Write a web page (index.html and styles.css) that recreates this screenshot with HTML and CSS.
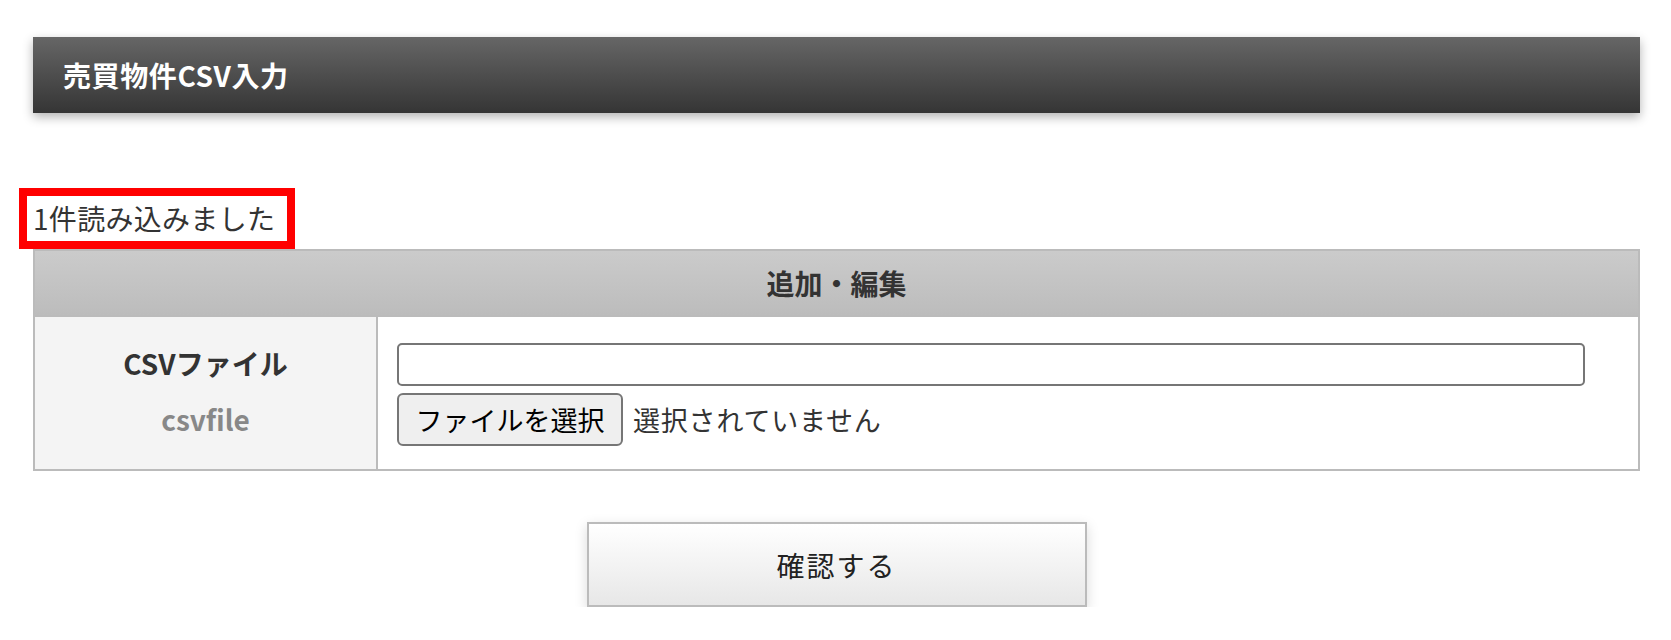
FILE: index.html
```html
<!DOCTYPE html>
<html lang="ja">
<head>
	<meta charset="utf-8">
	<meta name="viewport" content="width=device-width, initial-scale=1">
	<title>売買物件CSV入力</title>
	<link rel="stylesheet" href="styles.css">
</head>
<body>
	<div class="wrap">
		<h1 class="page-title">売買物件CSV入力</h1>

		<p class="notice">1件読み込みました</p>

		<table class="form-table">
			<tr>
				<th class="table-head" colspan="2">追加・編集</th>
			</tr>
			<tr>
				<th class="label">
					<span class="label-name">CSVファイル</span>
					<span class="label-key">csvfile</span>
				</th>
				<td class="field">
					<input type="text" class="path">
					<div class="file-row">
						<button type="button" class="file-btn">ファイルを選択</button>
						<span class="file-status">選択されていません</span>
					</div>
				</td>
			</tr>
		</table>

		<div class="actions">
			<button type="submit" class="confirm">確認する</button>
		</div>
	</div>
</body>
</html>
```

FILE: styles.css
```css
*{
	margin: 0;
}

body{
	font-family: "Noto Sans CJK JP", "Noto Sans", sans-serif;
	color: #333;
	background: #fff;
}

.wrap{
	padding: 37px 31px 0 33px;
}

.page-title{
	font-size: 28px;
	font-weight: 700;
	line-height: 76px;
	letter-spacing: 0.6px;
	color: #fff;
	padding: 0 30px;
	background: linear-gradient(180deg, #666 0%, #353535 100%);
	box-shadow: 0 4px 10px rgba(0, 0, 0, 0.3);
}

.notice{
	display: inline-block;
	margin: 75px 0 0 -14px;
	padding: 0 12px 0 6px;
	border: 8px solid #f00;
	font-size: 28px;
	line-height: 45px;
	letter-spacing: 0.3px;
	color: #333;
}

.form-table{
	width: 100%;
	border-collapse: separate;
	border-spacing: 0;
	border: 2px solid #bbb;
}

.table-head{
	height: 64px;
	padding: 0;
	font-size: 28px;
	font-weight: 700;
	color: #333;
	background: linear-gradient(180deg, #cbcbcb 0%, #bcbcbc 100%);
	border-bottom: 2px solid #bbb;
}

.label{
	width: 343px;
	box-sizing: border-box;
	padding: 22px 0 0;
	vertical-align: top;
	background: #f4f4f4;
	border-right: 2px solid #bbb;
	font-weight: 700;
	font-size: 28px;
	line-height: 49px;
}

.label span{
	display: block;
}

.label-name{
	color: #333;
}

.label-key{
	margin-top: 7px;
	color: #888;
}

.field{
	padding: 26px 20px 23px 19px;
	vertical-align: top;
}

.path{
	display: block;
	width: 1188px;
	height: 43px;
	box-sizing: border-box;
	border: 2px solid #767676;
	border-radius: 5px;
	background: #fff;
}

.file-row{
	display: flex;
	align-items: center;
	gap: 10px;
	margin-top: 7px;
}

.file-btn{
	width: 226px;
	height: 53px;
	border: 2px solid #767676;
	border-radius: 6px;
	background: #efefef;
	font-family: "Noto Sans CJK JP", sans-serif;
	font-size: 27px;
	color: #000;
	padding: 0;
}

.file-status{
	font-size: 27px;
	letter-spacing: 0.8px;
	color: #333;
}

.actions{
	display: flex;
	justify-content: center;
	margin-top: 51px;
}

.confirm{
	width: 500px;
	height: 85px;
	border: 2px solid #bbb;
	background: linear-gradient(180deg, #fff 0%, #e7e7e7 100%);
	box-shadow: 0 4px 12px rgba(0, 0, 0, 0.15);
	font-family: "Noto Sans CJK JP", sans-serif;
	font-size: 28px;
	letter-spacing: 2px;
	color: #222;
	cursor: pointer;
}
```
